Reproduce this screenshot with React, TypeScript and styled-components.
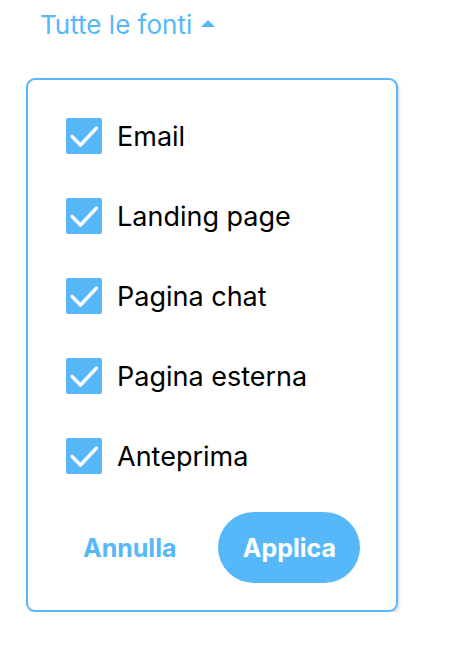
import styled, { createGlobalStyle } from 'styled-components';

const GlobalStyle = createGlobalStyle`
  body {
    margin: 0;
    background: #ffffff;
    font-family: Inter, "Noto Sans", sans-serif;
  }
`;

const BLUE = '#56b8f9';

const Page = styled.div`
  padding: 9px 0 0 26px;
`;

const Toggle = styled.button`
  display: flex;
  align-items: center;
  gap: 9px;
  margin: 0 0 37px 14px;
  padding: 0;
  border: none;
  background: none;
  color: ${BLUE};
  font-family: inherit;
  font-size: 26px;
  line-height: 32px;
  cursor: pointer;
`;

const Caret = styled.span`
  width: 0;
  height: 0;
  border-left: 7.5px solid transparent;
  border-right: 7.5px solid transparent;
  border-bottom: 7.5px solid ${BLUE};
  margin-top: -4px;
`;

const Card = styled.div`
  box-sizing: border-box;
  width: 372px;
  border: 2px solid ${BLUE};
  border-radius: 9px;
  box-shadow: 1px 2px 3px rgba(0, 0, 0, 0.18);
  padding: 38px 0 27px 38px;
  display: flex;
  flex-direction: column;
`;

const List = styled.div`
  display: flex;
  flex-direction: column;
  gap: 44px;
`;

const Row = styled.label`
  display: flex;
  align-items: center;
  gap: 15px;
  height: 36px;
  font-size: 27px;
  color: #000;
  cursor: pointer;
`;

const Box = styled.span`
  width: 36px;
  height: 36px;
  border-radius: 2px;
  background: ${BLUE};
  display: flex;
  align-items: center;
  justify-content: center;
  flex-shrink: 0;
`;

const Footer = styled.div`
  display: flex;
  align-items: center;
  margin-top: 38px;
  margin-left: 17px;
  gap: 42px;
`;

const Button = styled.button<{ $primary?: boolean }>`
  height: 71px;
  padding: 0;
  width: ${(p) => (p.$primary ? '142px' : 'auto')};
  border: none;
  border-radius: 36px;
  background: ${(p) => (p.$primary ? BLUE : 'transparent')};
  color: ${(p) => (p.$primary ? '#fff' : BLUE)};
  font-family: inherit;
  font-size: 25px;
  font-weight: 700;
  cursor: pointer;
`;

const sources = ['Email', 'Landing page', 'Pagina chat', 'Pagina esterna', 'Anteprima'];

const Check = () => (
  <svg width="36" height="36" viewBox="0 0 36 36">
    <path d="M6 18.5 L14.5 27 L30.5 10" fill="none" stroke="#fff" strokeWidth="3.4" strokeLinecap="round" strokeLinejoin="round" />
  </svg>
);

export default function App() {
  return (
    <Page>
      <GlobalStyle />
      <Toggle>
        Tutte le fonti
        <Caret />
      </Toggle>
      <Card>
        <List>
          {sources.map((s) => (
            <Row key={s}>
              <Box>
                <Check />
              </Box>
              {s}
            </Row>
          ))}
        </List>
        <Footer>
          <Button>Annulla</Button>
          <Button $primary>Applica</Button>
        </Footer>
      </Card>
    </Page>
  );
}
